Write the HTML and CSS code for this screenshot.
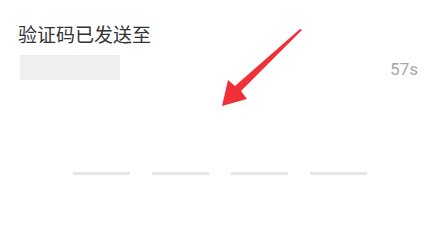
FILE: index.html
```html
<!DOCTYPE html>
<html lang="zh">
<head>
<meta charset="utf-8">
<link rel="stylesheet" href="styles.css">
</head>
<body>
<div class="page">
  <div class="title">验证码已发送至</div>
  <div class="phone-row">
    <div class="phone-mask"></div>
    <div class="timer">57s</div>
  </div>
  <div class="code-row">
    <span class="code-slot"></span>
    <span class="code-slot"></span>
    <span class="code-slot"></span>
    <span class="code-slot"></span>
  </div>
  <svg class="arrow" width="438" height="234" viewBox="0 0 438 234">
    <polygon points="302,30 241,91 247,99 222,106 228,80 235,86 300,29" fill="#f0313a"/>
  </svg>
</div>
</body>
</html>
```

FILE: styles.css
```css
html, body {
  margin: 0;
  padding: 0;
  background: #ffffff;
}
.page {
  position: relative;
  width: 438px;
  height: 234px;
  overflow: hidden;
  font-family: "Noto Sans CJK SC", "Noto Sans", sans-serif;
}
.title {
  padding: 23px 0 0 18px;
  font-size: 19px;
  line-height: 22px;
  color: #333333;
}
.phone-row {
  display: flex;
  justify-content: space-between;
  align-items: center;
  padding: 10px 20px 0 20px;
}
.phone-mask {
  width: 100px;
  height: 25px;
  background: #efefef;
}
.timer {
  font-family: Roboto, "Noto Sans", sans-serif;
  font-size: 17px;
  line-height: 20px;
  color: #a8a8a8;
  margin-top: 2px;
}
.code-row {
  display: flex;
  gap: 22px;
  padding: 92px 0 0 73px;
}
.code-slot {
  display: block;
  width: 57px;
  height: 3px;
  background: #e6e6e6;
}
.arrow {
  position: absolute;
  left: 0;
  top: 0;
}
```
